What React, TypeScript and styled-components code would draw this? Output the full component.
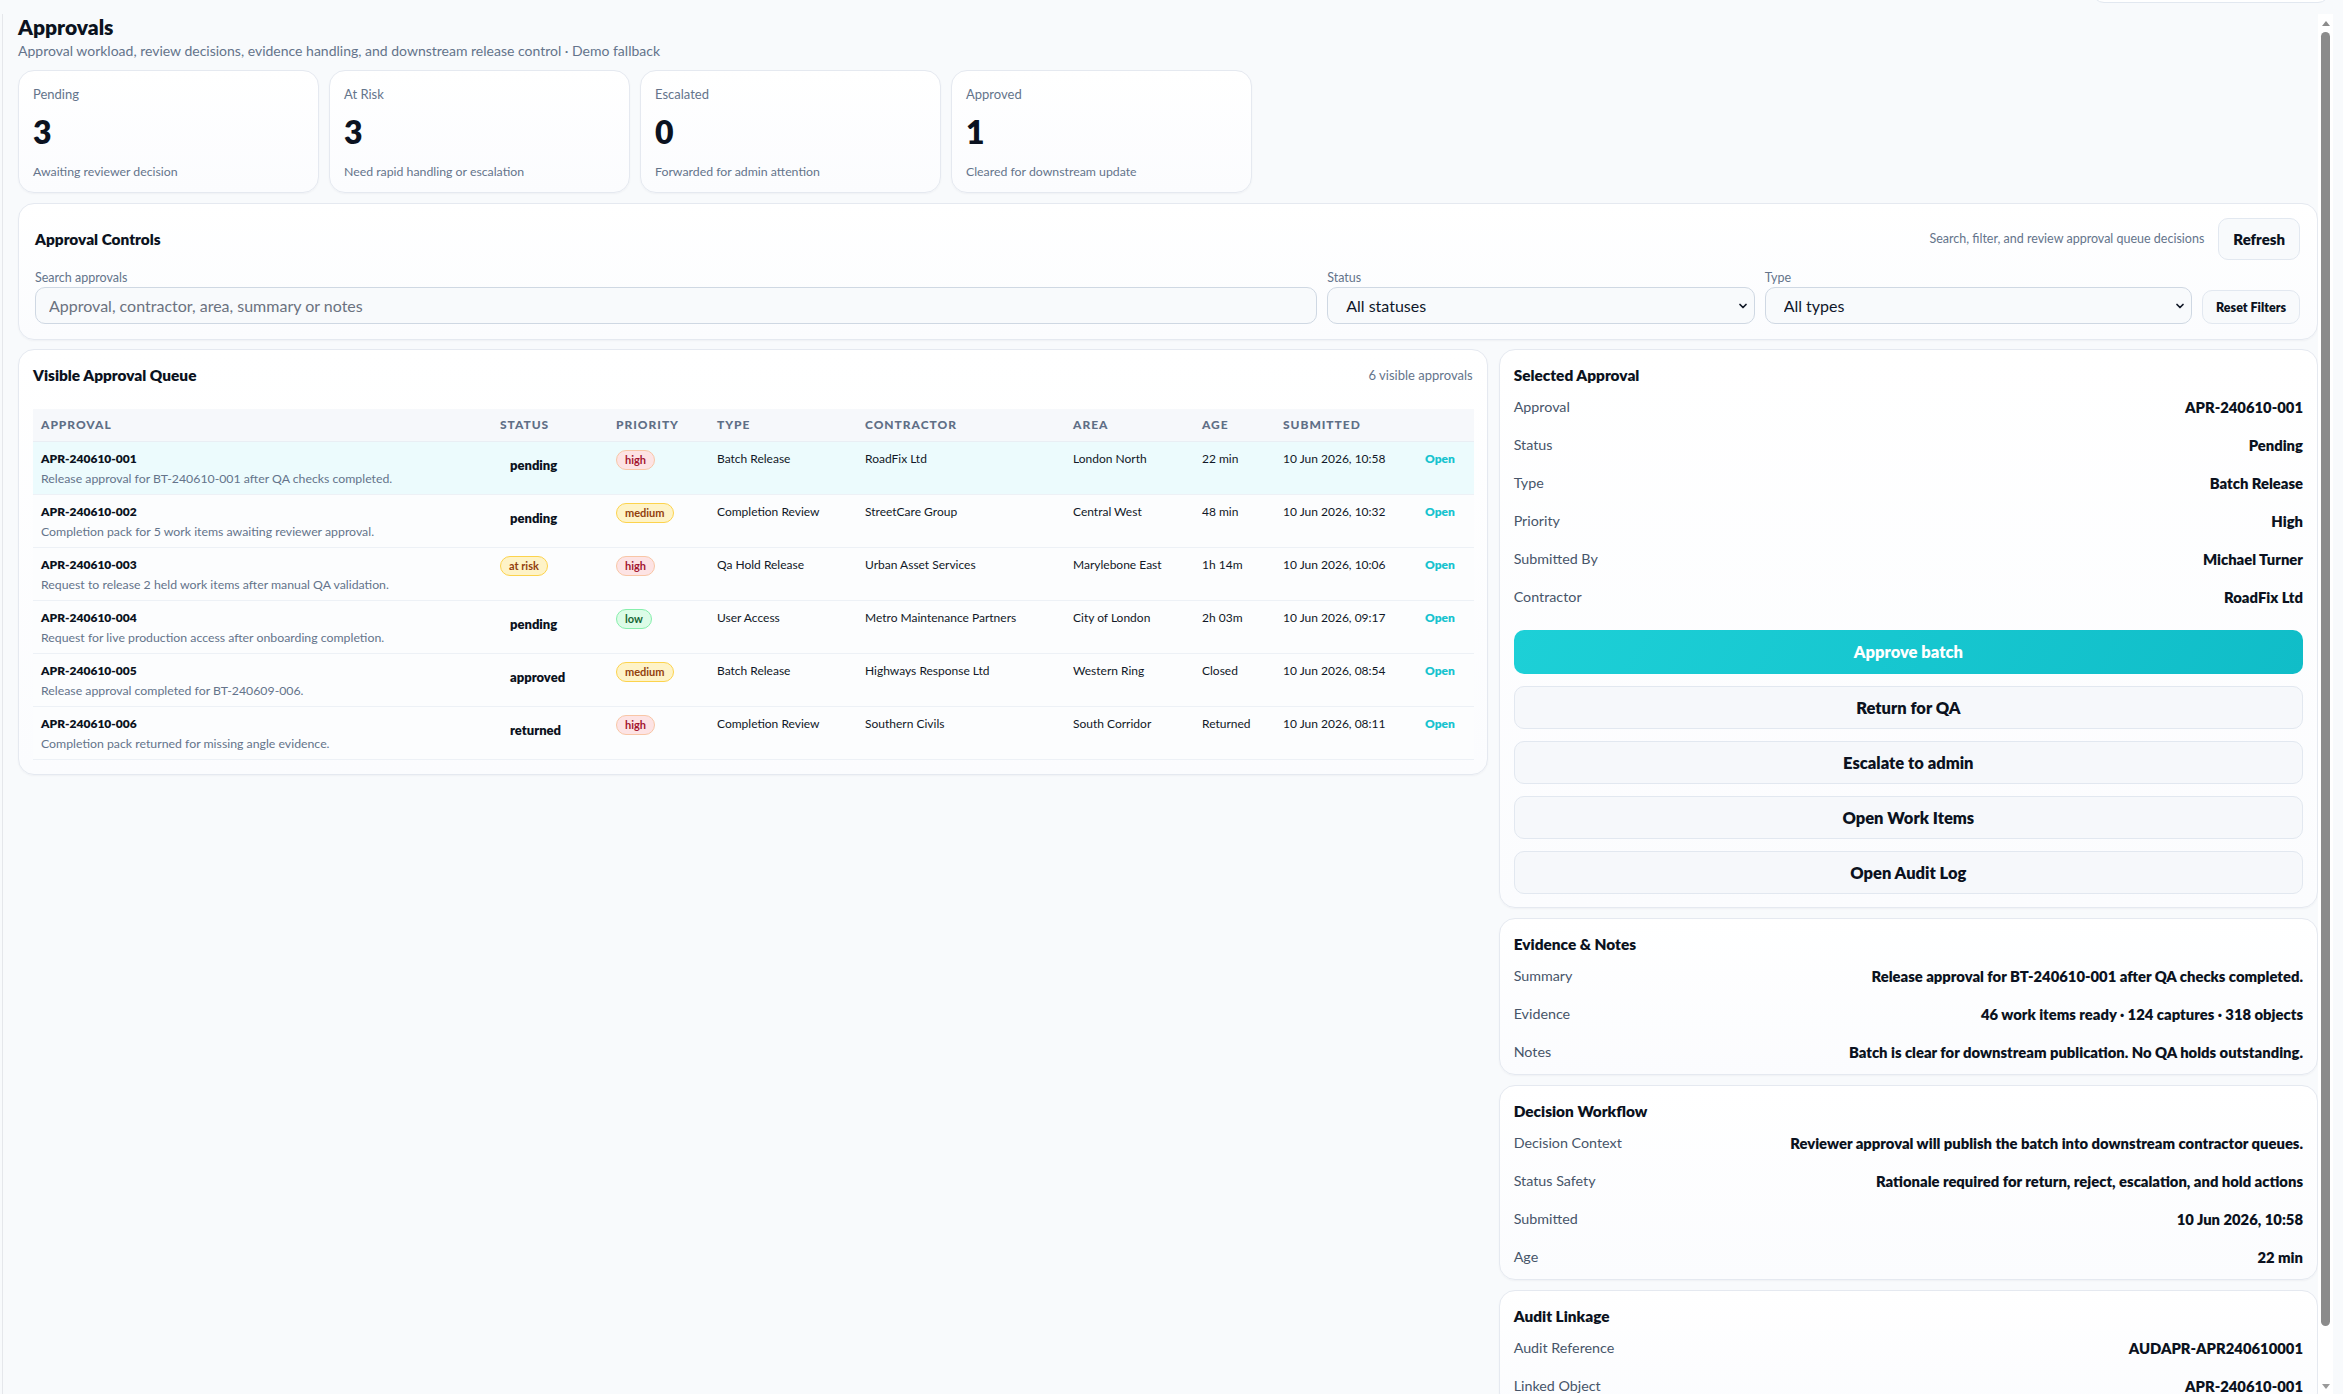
import React from 'react';
import styled, { createGlobalStyle, css } from 'styled-components';
import { ChevronDown } from 'lucide-react';

const GlobalStyle = createGlobalStyle`
  html, body {
    margin: 0;
    padding: 0;
    height: 100%;
    overflow: hidden;
    background: #f8fafc;
  }
  body {
    font-family: Lato, 'Liberation Sans', Arial, sans-serif;
    color: #0f172a;
  }
  * {
    box-sizing: border-box;
  }
`;

type Tone = 'plain' | 'high' | 'medium' | 'low' | 'risk';

interface Approval {
  id: string;
  summary: string;
  status: string;
  statusTone: Tone;
  priority: 'high' | 'medium' | 'low';
  type: string;
  contractor: string;
  area: string;
  age: string;
  submitted: string;
}

const approvals: Approval[] = [
  {
    id: 'APR-240610-001',
    summary: 'Release approval for BT-240610-001 after QA checks completed.',
    status: 'pending',
    statusTone: 'plain',
    priority: 'high',
    type: 'Batch Release',
    contractor: 'RoadFix Ltd',
    area: 'London North',
    age: '22 min',
    submitted: '10 Jun 2026, 10:58',
  },
  {
    id: 'APR-240610-002',
    summary: 'Completion pack for 5 work items awaiting reviewer approval.',
    status: 'pending',
    statusTone: 'plain',
    priority: 'medium',
    type: 'Completion Review',
    contractor: 'StreetCare Group',
    area: 'Central West',
    age: '48 min',
    submitted: '10 Jun 2026, 10:32',
  },
  {
    id: 'APR-240610-003',
    summary: 'Request to release 2 held work items after manual QA validation.',
    status: 'at risk',
    statusTone: 'risk',
    priority: 'high',
    type: 'Qa Hold Release',
    contractor: 'Urban Asset Services',
    area: 'Marylebone East',
    age: '1h 14m',
    submitted: '10 Jun 2026, 10:06',
  },
  {
    id: 'APR-240610-004',
    summary: 'Request for live production access after onboarding completion.',
    status: 'pending',
    statusTone: 'plain',
    priority: 'low',
    type: 'User Access',
    contractor: 'Metro Maintenance Partners',
    area: 'City of London',
    age: '2h 03m',
    submitted: '10 Jun 2026, 09:17',
  },
  {
    id: 'APR-240610-005',
    summary: 'Release approval completed for BT-240609-006.',
    status: 'approved',
    statusTone: 'plain',
    priority: 'medium',
    type: 'Batch Release',
    contractor: 'Highways Response Ltd',
    area: 'Western Ring',
    age: 'Closed',
    submitted: '10 Jun 2026, 08:54',
  },
  {
    id: 'APR-240610-006',
    summary: 'Completion pack returned for missing angle evidence.',
    status: 'returned',
    statusTone: 'plain',
    priority: 'high',
    type: 'Completion Review',
    contractor: 'Southern Civils',
    area: 'South Corridor',
    age: 'Returned',
    submitted: '10 Jun 2026, 08:11',
  },
];

const stats = [
  { label: 'Pending', value: '3', note: 'Awaiting reviewer decision' },
  { label: 'At Risk', value: '3', note: 'Need rapid handling or escalation' },
  { label: 'Escalated', value: '0', note: 'Forwarded for admin attention' },
  { label: 'Approved', value: '1', note: 'Cleared for downstream update' },
];

const columns = [
  { label: 'Approval', width: 459 },
  { label: 'Status', width: 116 },
  { label: 'Priority', width: 101 },
  { label: 'Type', width: 148 },
  { label: 'Contractor', width: 208 },
  { label: 'Area', width: 129 },
  { label: 'Age', width: 81 },
  { label: 'Submitted', width: 142 },
  { label: '', width: 57 },
];

const Shell = styled.div`
  position: relative;
  height: 100vh;
  padding: 14px 10px 0 2px;
`;

const TopChip = styled.div`
  position: absolute;
  top: -30px;
  right: 13px;
  width: 238px;
  height: 33px;
  background: #ffffff;
  border: 1px solid #e2e8f0;
  border-radius: 12px;
`;

/* the page's own scrollbar, drawn because the headless browser hides it */
const ScrollRail = styled.div`
  position: absolute;
  top: 14px;
  right: 10px;
  bottom: 0;
  width: 15px;
  display: flex;
  flex-direction: column;
  align-items: center;
  background: #ffffff;
`;

const RailArrow = styled.span<{ $down?: boolean }>`
  width: 0;
  height: 0;
  margin: ${(p) => (p.$down ? 'auto 0 5px' : '7px 0 6px')};
  border-left: 4.5px solid transparent;
  border-right: 4.5px solid transparent;
  ${(p) => (p.$down ? 'border-top: 5px solid #9a9a9a;' : 'border-bottom: 5px solid #8b8b8b;')}
`;

const RailThumb = styled.span`
  width: 9px;
  height: 1294px;
  border-radius: 5px;
  background: #8b8b8b;
`;

const Scroller = styled.main`
  height: 100%;
  overflow-y: auto;
  scrollbar-width: none;
  border-left: 1px solid #e5e7eb;
  padding: 0 15px 34px 15px;
`;

const PageTitle = styled.h1`
  margin: 0;
  font-size: 21px;
  font-weight: 800;
  line-height: 26px;
  color: #0b1220;
`;

const PageSubtitle = styled.p`
  margin: 2px 0 0;
  font-size: 14px;
  line-height: 18px;
  color: #64748b;
`;

const surface = css`
  background: linear-gradient(180deg, #ffffff 0%, #fbfcfe 100%);
  border: 1px solid #e5e9f0;
  border-radius: 16px;
  box-shadow: 0 1px 2px rgba(15, 23, 42, 0.04);
`;

const StatGrid = styled.section`
  display: grid;
  grid-template-columns: repeat(4, 301px);
  gap: 10px;
  margin-top: 10px;
`;

const StatCard = styled.div`
  ${surface};
  height: 123px;
  padding: 14px 14px 0;
`;

const StatLabel = styled.div`
  font-size: 13px;
  line-height: 18px;
  color: #64748b;
`;

const StatValue = styled.div`
  margin-top: 10px;
  font-size: 32px;
  font-weight: 800;
  line-height: 38px;
  color: #0b1220;
`;

const StatNote = styled.div`
  margin-top: 13px;
  font-size: 12.3px;
  line-height: 16px;
  color: #64748b;
`;

const Panel = styled.section`
  ${surface};
  padding: 15px 14px 13px;
`;

const ControlsPanel = styled(Panel)`
  margin-top: 10px;
  padding: 14px 17px 15px 16px;
`;

const PanelHeader = styled.div`
  display: flex;
  align-items: center;
  justify-content: space-between;
  gap: 14px;
`;

const PanelTitle = styled.h2`
  margin: 0;
  font-size: 15.4px;
  font-weight: 800;
  line-height: 20px;
  color: #0b1220;
`;

const HeaderTools = styled.div`
  display: flex;
  align-items: center;
  gap: 14px;
`;

const Hint = styled.span<{ $size?: number }>`
  font-size: ${(p) => p.$size ?? 12.5}px;
  line-height: 16px;
  color: #64748b;
`;

const GhostButton = styled.button<{ $compact?: boolean }>`
  height: ${(p) => (p.$compact ? '34px' : '42px')};
  padding: 0 ${(p) => (p.$compact ? '13px' : '14px')};
  font-family: inherit;
  font-size: ${(p) => (p.$compact ? '12.5px' : '15px')};
  font-weight: 800;
  color: #0b1220;
  background: #f8fafc;
  border: 1px solid #e2e8f0;
  border-radius: 10px;
  cursor: pointer;
`;

const FilterGrid = styled.div`
  display: grid;
  grid-template-columns: 3fr 1fr 1fr auto;
  gap: 10px;
  align-items: end;
  margin-top: 10px;
`;

const Field = styled.label`
  display: flex;
  flex-direction: column;
  gap: 2px;
`;

const FieldLabel = styled.span`
  font-size: 12.5px;
  line-height: 15px;
  color: #64748b;
`;

const SearchInput = styled.input`
  height: 37px;
  padding: 0 13px;
  font-family: inherit;
  font-size: 16px;
  color: #0f172a;
  background: #f8fafc;
  border: 1px solid #cfd8e3;
  border-radius: 10px;
  outline: none;

  &::placeholder {
    color: #6b7280;
  }
`;

const SelectWrap = styled.div`
  position: relative;
`;

const Select = styled.select`
  width: 100%;
  height: 37px;
  padding: 0 28px 0 18px;
  font-family: inherit;
  font-size: 16px;
  color: #0f172a;
  background: #f8fafc;
  border: 1px solid #cfd8e3;
  border-radius: 10px;
  appearance: none;
  outline: none;
`;

const SelectChevron = styled(ChevronDown)`
  position: absolute;
  top: 50%;
  right: 6px;
  transform: translateY(-50%);
  pointer-events: none;
  color: #111827;
`;

const MainGrid = styled.div`
  display: grid;
  grid-template-columns: minmax(0, 1469fr) minmax(0, 819fr);
  gap: 11px;
  align-items: start;
  margin-top: 9px;
`;

const QueuePanel = styled(Panel)`
  padding: 15px 14px 14px;
`;

const Table = styled.table`
  width: 100%;
  margin-top: 24px;
  border-collapse: collapse;
  table-layout: fixed;
`;

const HeadCell = styled.th`
  height: 32px;
  padding: 0 8px;
  text-align: left;
  font-size: 12px;
  font-weight: 900;
  letter-spacing: 0.08em;
  text-transform: uppercase;
  color: #5f6f86;
  background: #f6f8fb;
  border-bottom: 1px solid #e9eef4;
`;

const Row = styled.tr<{ $selected?: boolean }>`
  background: ${(p) => (p.$selected ? '#ecfbfd' : '#fcfdfe')};
`;

const Cell = styled.td`
  padding: 8px 8px 6px;
  vertical-align: top;
  font-size: 12px;
  line-height: 18px;
  color: #111827;
  border-bottom: 1px solid #edf1f6;
  white-space: nowrap;
`;

const ApprovalId = styled.div`
  font-weight: 800;
  color: #0b1220;
`;

const ApprovalSummary = styled.div`
  margin-top: 2px;
  font-size: 12.3px;
  color: #64748b;
`;

const toneStyles: Record<Tone, string> = {
  plain: 'background: transparent; border-color: transparent; color: #0b1220;',
  high: 'background: #fde3e4; border-color: #f8c6a6; color: #a3152f;',
  medium: 'background: #fef3c7; border-color: #fcd34d; color: #92400e;',
  risk: 'background: #fef3c7; border-color: #fcd34d; color: #92400e;',
  low: 'background: #dcfce7; border-color: #86efac; color: #166534;',
};

const Pill = styled.span<{ $tone: Tone }>`
  display: inline-block;
  padding: 0 8px;
  font-size: 11px;
  font-weight: 700;
  line-height: 18px;
  border: 1px solid;
  border-radius: 999px;
  ${(p) => toneStyles[p.$tone]};

  ${(p) =>
    p.$tone === 'plain' &&
    css`
      padding: 5px 9px;
      font-size: 13px;
      font-weight: 800;
    `}
`;

const OpenLink = styled.a`
  font-weight: 800;
  color: #17c3cf;
  text-decoration: none;
`;

const SideColumn = styled.div`
  display: flex;
  flex-direction: column;
  gap: 10px;
`;

const DetailList = styled.dl`
  display: flex;
  flex-direction: column;
  gap: 20px;
  margin: 13px 0 0;
`;

const DetailRow = styled.div`
  display: flex;
  align-items: center;
  justify-content: space-between;
  gap: 24px;
  line-height: 18px;
`;

const DetailLabel = styled.dt`
  font-size: 14.3px;
  color: #475569;
  white-space: nowrap;
`;

const DetailValue = styled.dd`
  margin: 0;
  font-size: 14.8px;
  font-weight: 800;
  color: #0b1220;
  text-align: right;
`;

const Actions = styled.div`
  display: flex;
  flex-direction: column;
  gap: 12px;
  margin-top: 24px;
`;

const ActionButton = styled.button<{ $primary?: boolean }>`
  height: ${(p) => (p.$primary ? '44px' : '43px')};
  font-family: inherit;
  font-size: 16.5px;
  font-weight: 800;
  border-radius: 10px;
  cursor: pointer;
  ${(p) =>
    p.$primary
      ? css`
          color: #ffffff;
          background: linear-gradient(120deg, #1dd0d7 0%, #10bdc8 100%);
          border: none;
        `
      : css`
          color: #0b1220;
          background: #f6f8fb;
          border: 1px solid #e2e8f0;
        `}
`;

type Detail = [string, string];

const DetailPanel: React.FC<{ title: string; items: Detail[]; children?: React.ReactNode }> = ({
  title,
  items,
  children,
}) => (
  <Panel>
    <PanelTitle>{title}</PanelTitle>
    <DetailList>
      {items.map(([label, value]) => (
        <DetailRow key={label}>
          <DetailLabel>{label}</DetailLabel>
          <DetailValue>{value}</DetailValue>
        </DetailRow>
      ))}
    </DetailList>
    {children}
  </Panel>
);

export default function App() {
  const selected = approvals[0];

  return (
    <Shell>
      <GlobalStyle />
      <TopChip />
      <Scroller>
        <PageTitle>Approvals</PageTitle>
        <PageSubtitle>
          Approval workload, review decisions, evidence handling, and downstream release control · Demo fallback
        </PageSubtitle>

        <StatGrid>
          {stats.map((s) => (
            <StatCard key={s.label}>
              <StatLabel>{s.label}</StatLabel>
              <StatValue>{s.value}</StatValue>
              <StatNote>{s.note}</StatNote>
            </StatCard>
          ))}
        </StatGrid>

        <ControlsPanel>
          <PanelHeader>
            <PanelTitle>Approval Controls</PanelTitle>
            <HeaderTools>
              <Hint>Search, filter, and review approval queue decisions</Hint>
              <GhostButton>Refresh</GhostButton>
            </HeaderTools>
          </PanelHeader>
          <FilterGrid>
            <Field>
              <FieldLabel>Search approvals</FieldLabel>
              <SearchInput placeholder="Approval, contractor, area, summary or notes" />
            </Field>
            <Field>
              <FieldLabel>Status</FieldLabel>
              <SelectWrap>
                <Select defaultValue="all">
                  <option value="all">All statuses</option>
                </Select>
                <SelectChevron size={12} strokeWidth={3.5} />
              </SelectWrap>
            </Field>
            <Field>
              <FieldLabel>Type</FieldLabel>
              <SelectWrap>
                <Select defaultValue="all">
                  <option value="all">All types</option>
                </Select>
                <SelectChevron size={12} strokeWidth={3.5} />
              </SelectWrap>
            </Field>
            <GhostButton $compact>Reset Filters</GhostButton>
          </FilterGrid>
        </ControlsPanel>

        <MainGrid>
          <QueuePanel>
            <PanelHeader>
              <PanelTitle>Visible Approval Queue</PanelTitle>
              <Hint $size={13}>{approvals.length} visible approvals</Hint>
            </PanelHeader>
            <Table>
              <colgroup>
                {columns.map((c, i) => (
                  <col key={i} style={{ width: c.width }} />
                ))}
              </colgroup>
              <thead>
                <tr>
                  {columns.map((c, i) => (
                    <HeadCell key={i}>{c.label}</HeadCell>
                  ))}
                </tr>
              </thead>
              <tbody>
                {approvals.map((a) => (
                  <Row key={a.id} $selected={a.id === selected.id}>
                    <Cell>
                      <ApprovalId>{a.id}</ApprovalId>
                      <ApprovalSummary>{a.summary}</ApprovalSummary>
                    </Cell>
                    <Cell>
                      <Pill $tone={a.statusTone}>{a.status}</Pill>
                    </Cell>
                    <Cell>
                      <Pill $tone={a.priority}>{a.priority}</Pill>
                    </Cell>
                    <Cell>{a.type}</Cell>
                    <Cell>{a.contractor}</Cell>
                    <Cell>{a.area}</Cell>
                    <Cell>{a.age}</Cell>
                    <Cell>{a.submitted}</Cell>
                    <Cell>
                      <OpenLink href="#">Open</OpenLink>
                    </Cell>
                  </Row>
                ))}
              </tbody>
            </Table>
          </QueuePanel>

          <SideColumn>
            <DetailPanel
              title="Selected Approval"
              items={[
                ['Approval', selected.id],
                ['Status', 'Pending'],
                ['Type', selected.type],
                ['Priority', 'High'],
                ['Submitted By', 'Michael Turner'],
                ['Contractor', selected.contractor],
              ]}
            >
              <Actions>
                <ActionButton $primary>Approve batch</ActionButton>
                <ActionButton>Return for QA</ActionButton>
                <ActionButton>Escalate to admin</ActionButton>
                <ActionButton>Open Work Items</ActionButton>
                <ActionButton>Open Audit Log</ActionButton>
              </Actions>
            </DetailPanel>

            <DetailPanel
              title="Evidence & Notes"
              items={[
                ['Summary', selected.summary],
                ['Evidence', '46 work items ready · 124 captures · 318 objects'],
                ['Notes', 'Batch is clear for downstream publication. No QA holds outstanding.'],
              ]}
            />

            <DetailPanel
              title="Decision Workflow"
              items={[
                ['Decision Context', 'Reviewer approval will publish the batch into downstream contractor queues.'],
                ['Status Safety', 'Rationale required for return, reject, escalation, and hold actions'],
                ['Submitted', selected.submitted],
                ['Age', selected.age],
              ]}
            />

            <DetailPanel
              title="Audit Linkage"
              items={[
                ['Audit Reference', 'AUDAPR-APR240610001'],
                ['Linked Object', selected.id],
              ]}
            />
          </SideColumn>
        </MainGrid>
      </Scroller>
      <ScrollRail>
        <RailArrow />
        <RailThumb />
        <RailArrow $down />
      </ScrollRail>
    </Shell>
  );
}
